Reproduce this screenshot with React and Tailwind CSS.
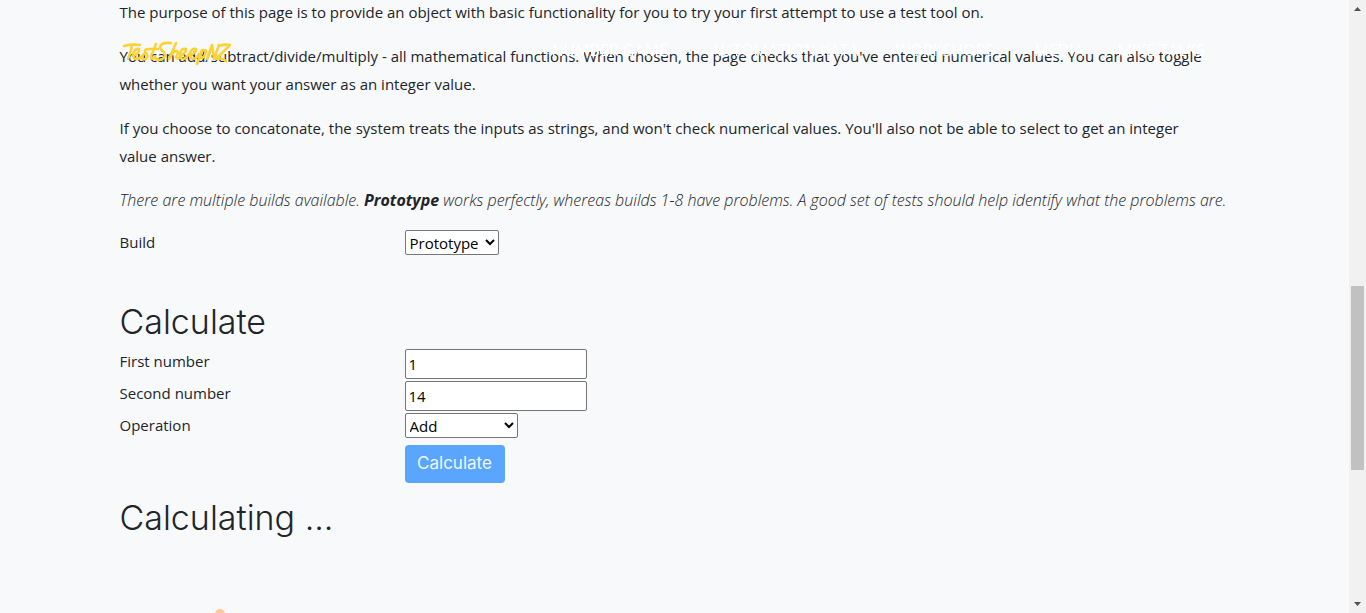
import React, { useState } from "react";

const links = [
  { label: "Number Game", width: "w-[159px]" },
  { label: "Automation Kata", width: "w-[185px]" },
  { label: "Workshops", width: "w-[139px]" },
  { label: "Media", width: "w-[83px]" },
  { label: "Mike Talks", width: "w-[96px]" },
];

function Navbar() {
  return (
    <nav className="fixed inset-x-0 top-0 z-10 pr-[17px]">
      <div className="mx-auto flex max-w-[1110px] items-start justify-between pt-[34px]">
        <a href="#top" aria-label="TestSheepNZ" className="block">
          <svg className="block h-[36px] w-[116px] overflow-visible" viewBox="0 0 116 36" aria-hidden="true">
            <g fill="none" stroke="#fed136" strokeWidth="2.6" strokeLinecap="round" strokeLinejoin="round">
              <path d="M4 12Q12 10 20 11M12 11Q11 18 8 25" />
              <path d="M14 22Q20 18 19 15Q15 14 13 20Q13 27 20 24L24 20" />
              <path d="M29 15Q24 15 25 18Q29 21 26 25Q23 26 21 24" />
              <path d="M36 10L31 22Q31 26 35 24M29 15H38" />
              <path d="M51 9Q41 8 40 13Q41 17 44 18Q47 24 40 26Q36 26 35 23" />
              <path d="M56 9L49 25Q54 16 57 17Q59 19 56 23Q57 26 60 23" />
              <path d="M61 21Q67 18 66 15Q61 14 60 20Q60 27 66 24L69 20" />
              <path d="M71 21Q77 18 76 15Q71 14 70 20Q70 27 76 24L79 20" />
              <path d="M82 16L77 30M81 18Q86 14 86 18Q84 25 79 24" />
              <path d="M87 25L92 11L94 25L99 11" />
              <path d="M99 12Q105 10 110 11Q103 18 96 25Q101 23 106 27" />
            </g>
          </svg>
        </a>
        <ul className="mt-1.5 flex pr-4 font-['Open_Sans',sans-serif] text-base leading-5 text-white uppercase">
          {links.map((l) => (
            <li key={l.label} className={l.width}>
              <a href="#nav" className="whitespace-nowrap">{l.label}</a>
            </li>
          ))}
        </ul>
      </div>
    </nav>
  );
}

function Row({ id, label, children }) {
  return (
    <div className="grid grid-cols-[285px_1fr] items-start">
      <label htmlFor={id} className="leading-6">{label}</label>
      <div className="flex">{children}</div>
    </div>
  );
}

function Scrollbar() {
  return (
    <div className="fixed inset-y-0 right-0 z-20 flex w-[17px] flex-col items-center justify-between bg-[#f1f1f1] py-[7px]" aria-hidden="true">
      <svg className="h-1 w-[7px]" viewBox="0 0 7 4"><path d="M0 4L3.5 0L7 4Z" fill="#505050" /></svg>
      <div className="absolute top-[286px] h-[184px] w-[13px] bg-[#c1c1c1]" />
      <svg className="h-1 w-[7px]" viewBox="0 0 7 4"><path d="M0 0L3.5 4L7 0Z" fill="#505050" /></svg>
    </div>
  );
}

export default function App() {
  const [build, setBuild] = useState("Prototype");
  const [first, setFirst] = useState("1");
  const [second, setSecond] = useState("14");
  const [operation, setOperation] = useState("Add");
  const field = "h-[30px] w-[182px] rounded-xs border border-[#767676] bg-white px-[3px] text-black";
  const select = "h-[25px] rounded-xs border border-[#767676] bg-white text-black";
  return (
    <div className="min-h-screen overflow-hidden bg-[#f8f9fb] pr-[17px] font-['Open_Sans','Noto_Sans',sans-serif] text-[15px] text-[#212529]">
      <Navbar />
      <main className="mx-auto -mt-0.5 max-w-[1110px]">
        <div className="flex flex-col gap-4 leading-7">
          <p>The purpose of this page is to provide an object with basic functionality for you to try your first attempt to use a test tool on.</p>
          <p>You can add/subtract/divide/multiply - all mathematical functions. When chosen, the page checks that you've entered numerical values. You can also toggle whether you want your answer as an integer value.</p>
          <p className="pr-6">If you choose to concatonate, the system treats the inputs as strings, and won't check numerical values. You'll also not be able to select to get an integer value answer.</p>
          <p className="text-base leading-7 font-light italic">There are multiple builds available. <b className="font-bold">Prototype</b> works perfectly, whereas builds 1-8 have problems. A good set of tests should help identify what the problems are.</p>
        </div>
        <form onSubmit={(e) => e.preventDefault()} className="pt-4">
          <Row id="build" label="Build">
            <select id="build" value={build} onChange={(e) => setBuild(e.target.value)} className={select + " w-[94px]"}>
              <option>Prototype</option>
              {[1, 2, 3, 4, 5, 6, 7, 8].map((n) => <option key={n}>{n}</option>)}
            </select>
          </Row>
          <h2 className="mt-12 mb-2 font-[Inter,sans-serif] text-[34px] leading-[38px] font-light">Calculate</h2>
          <div className="flex flex-col gap-0.5">
            <Row id="first" label="First number">
              <input id="first" value={first} onChange={(e) => setFirst(e.target.value)} className={field} />
            </Row>
            <Row id="second" label="Second number">
              <input id="second" value={second} onChange={(e) => setSecond(e.target.value)} className={field} />
            </Row>
            <Row id="operation" label="Operation">
              <select id="operation" value={operation} onChange={(e) => setOperation(e.target.value)} className={select + " w-[113px]"}>
                <option>Add</option>
                <option>Subtract</option>
                <option>Multiply</option>
                <option>Divide</option>
                <option>Concatenate</option>
              </select>
            </Row>
          </div>
          <div className="grid grid-cols-[285px_1fr] pt-[7px]">
            <button type="submit" className="col-start-2 h-[38px] w-[100px] rounded-sm bg-[#5aa6ff] font-[Inter,sans-serif] text-[17px] text-[#eef6ff]">Calculate</button>
          </div>
        </form>
        <h2 className="mt-4 font-[Inter,sans-serif] text-[34px] leading-[38px] font-light">Calculating ...</h2>
      </main>
      <div className="fixed inset-x-0 bottom-0 h-1 overflow-hidden pr-[17px]" aria-hidden="true">
        <div className="mx-auto max-w-[1110px] pl-[95px]">
          <div className="size-[10px] rounded-full bg-[#fdcb92]" />
        </div>
      </div>
      <Scrollbar />
    </div>
  );
}
